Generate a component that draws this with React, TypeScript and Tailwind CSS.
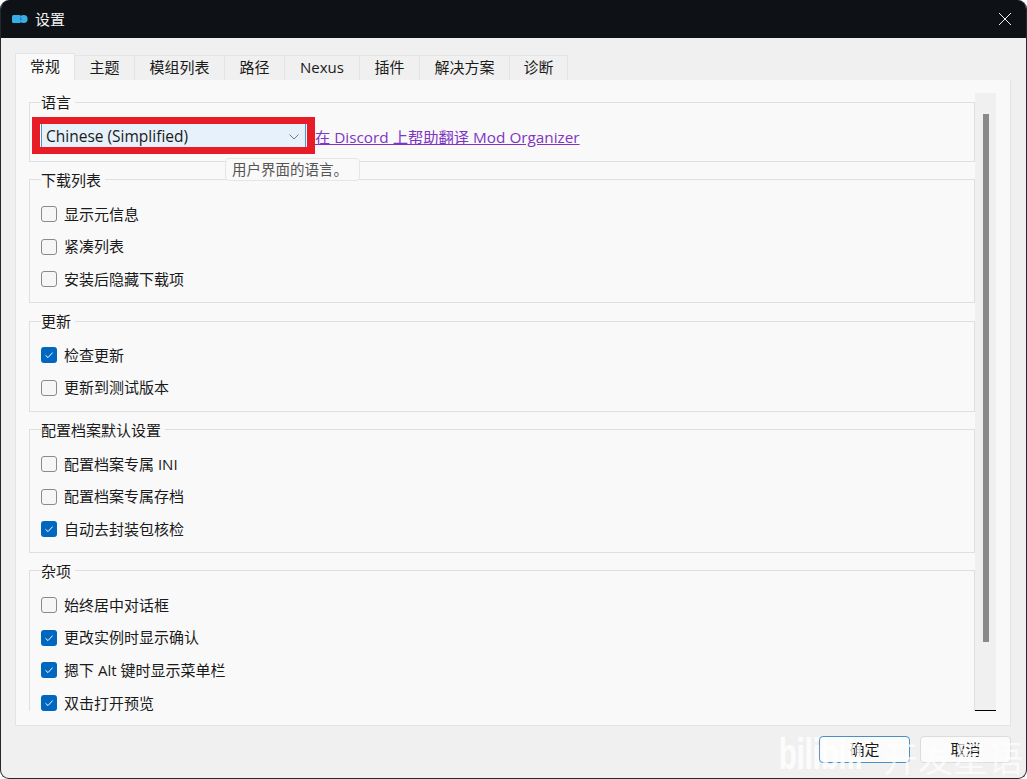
const font = { fontFamily: '"Open Sans","Noto Sans CJK SC",sans-serif' };

const tabs: [string, string][] = [
  ["主题", "w-[60px]"],
  ["模组列表", "w-[90px]"],
  ["路径", "w-[60px]"],
  ["Nexus", "w-[75px]"],
  ["插件", "w-[60px]"],
  ["解决方案", "w-[90px]"],
  ["诊断", "w-[58px]"],
];

function Row({ label, checked }: { label: string; checked?: boolean }) {
  return (
    <div className="flex h-5 items-center gap-[7px]">
      {checked ? (
        <span className="flex h-4 w-4 items-center justify-center rounded-[3px] bg-[#0067c0]">
          <svg width="10" height="10" viewBox="0 0 10 10" fill="none" stroke="#fff" strokeWidth="1">
            <path d="M1.5 5.3 L4 7.6 L8.6 2.6" />
          </svg>
        </span>
      ) : (
        <span className="h-4 w-4 rounded-[3px] border border-[#8a8a8a] bg-[#f6f6f6]" />
      )}
      <span>{label}</span>
    </div>
  );
}

function Group({
  title,
  rows,
  h,
  clip,
  top = "pt-[15px]",
  lead = "leading-[22px]",
}: {
  title: string;
  rows: [string, boolean?][];
  h: string;
  clip?: boolean;
  top?: string;
  lead?: string;
}) {
  return (
    <fieldset className={`${h} ${clip ? "border-b-0" : "border-b"} border-t border-l border-r border-[#dfdfdf] pl-[11px]`}>
      <legend className={`h-5 px-0 pr-1 ${lead}`}>{title}</legend>
      <div className={`flex flex-col gap-[12.7px] ${top}`}>
        {rows.map(([l, c]) => (
          <Row key={l} label={l} checked={c} />
        ))}
      </div>
    </fieldset>
  );
}

export default function App() {
  return (
    <div className="relative h-[779px] w-[1027px] overflow-hidden bg-white text-[15px] text-[#1a1a1a]" style={font}>
      <div className="flex h-full flex-col overflow-hidden rounded-[9px] border border-t-0 border-[#24282c] bg-[#f0f0f0]">
        <div className="-mx-px flex h-[38px] shrink-0 items-center bg-[#0e1216] pl-3 text-[#f2f2f2]">
          <svg width="16" height="10" viewBox="0 0 16 10" className="mr-[8px]">
            <rect x="0" y="1" width="9" height="8" rx="1.5" fill="#38aee6" />
            <circle cx="11.6" cy="5" r="4" fill="#38aee6" />
            <path d="M8.5 2.5 L9.5 5 L8.5 7.5 Z" fill="#16567a" />
          </svg>
          <span className="-ml-px">设置</span>
          <svg width="14" height="14" viewBox="0 0 14 14" className="ml-auto mr-[15px]" stroke="#f2f2f2" strokeWidth="1">
            <path d="M1 1 L13 13 M13 1 L1 13" />
          </svg>
        </div>

        <div className="flex min-h-0 flex-1 flex-col pb-[15px] pl-[14px] pr-[15px] pt-4">
          <div className="flex h-[26px] shrink-0 items-end">
            <div className="relative z-10 flex h-[27px] w-[60px] items-center justify-center border border-b-0 border-[#e4e4e4] bg-[#f9f9f9] pb-[2px]">
              常规
            </div>
            {tabs.map(([t, w]) => (
              <div key={t} className={`flex h-[25px] ${w} items-center justify-center border-r border-t border-[#e4e4e4] bg-[#f0f0f0] pb-[2px]`}>
                {t}
              </div>
            ))}
          </div>

          <div className="flex min-h-0 flex-1 border-x border-b border-[#e4e4e4] bg-[#f9f9f9] pb-[14px] pl-[13px] pr-[14px] pt-[12px]">
            <div className="flex min-w-0 flex-1 flex-col gap-[7px] overflow-hidden">
              <fieldset className="h-[70px] shrink-0 border border-[#dfdfdf] pl-[11px]">
                <legend className="h-5 pr-1 leading-5">语言</legend>
                <div className="mt-[11px] flex h-[28px] items-center">
                  <div className="flex h-[28px] w-[265px] shrink-0 items-center justify-between border border-[#4a9ac8] bg-[#e6f1fb] pl-1 pr-[6px] text-[15.5px]">
                    <span>Chinese (Simplified)</span>
                    <svg width="10" height="6" viewBox="0 0 10 6" fill="none" stroke="#777" strokeWidth="1">
                      <path d="M0.5 0.5 L5 5 L9.5 0.5" />
                    </svg>
                  </div>
                  <span className="ml-[9px] whitespace-nowrap text-[15.3px] text-[#8034c4] underline">在 Discord 上帮助翻译 Mod Organizer</span>
                </div>
              </fieldset>
              <Group title="下载列表" h="h-[134px] shrink-0" rows={[["显示元信息"], ["紧凑列表"], ["安装后隐藏下载项"]]} />
              <Group title="更新" h="h-[101px] shrink-0 mt-px" top="pt-[14px]" lead="leading-[20px]" rows={[["检查更新", true], ["更新到测试版本"]]} />
              <Group
                title="配置档案默认设置"
                h="h-[134px] shrink-0"
                rows={[["配置档案专属 INI"], ["配置档案专属存档"], ["自动去封装包核检", true]]}
              />
              <Group
                title="杂项"
                h="h-[200px] shrink-0"
                clip
                rows={[["始终居中对话框"], ["更改实例时显示确认", true], ["摁下 Alt 键时显示菜单栏", true], ["双击打开预览", true]]}
              />
            </div>
            <div className="mt-px flex w-[21px] shrink-0 justify-center border-b border-black bg-[#f0f0f0] pl-[1px] pt-[21px]">
              <div className="h-[528px] w-[6px] bg-[#8a8a8a]" />
            </div>
          </div>

          <div className="flex shrink-0 justify-end gap-[10px] pr-0 pt-[10px]">
            <div className="flex h-[27px] w-[91px] items-center justify-center rounded-[4px] border border-[#4a90c8] bg-[#fbfbfb]">确定</div>
            <div className="flex h-[27px] w-[91px] items-center justify-center rounded-[4px] border border-[#dcdcdc] bg-[#fbfbfb]">取消</div>
          </div>
        </div>
      </div>

      <div className="pointer-events-none absolute left-[32px] top-[117px] h-[37px] w-[283px] border-[7px] border-l-8 border-r-[8px] border-[#e81c26]" />
      <div className="absolute left-[225px] top-[158px] flex h-[23px] w-[135px] items-center rounded-[4px] border border-[#e6e6e6] bg-[#f9f9f9] pl-[6px] text-[14.5px] text-[#555]">
        用户界面的语言。
      </div>
      <div
        className="pointer-events-none absolute left-[779px] top-[745px] origin-bottom scale-y-[1.5] whitespace-nowrap text-[29px] font-bold leading-[34px] text-white/80"
        style={{ fontFamily: '"Liberation Sans",sans-serif' }}
      >
        bilibili
      </div>
      <div className="pointer-events-none absolute left-[883px] top-[738px] whitespace-nowrap text-[35px] leading-[42px] text-white/70">
        开发星语
      </div>
    </div>
  );
}
